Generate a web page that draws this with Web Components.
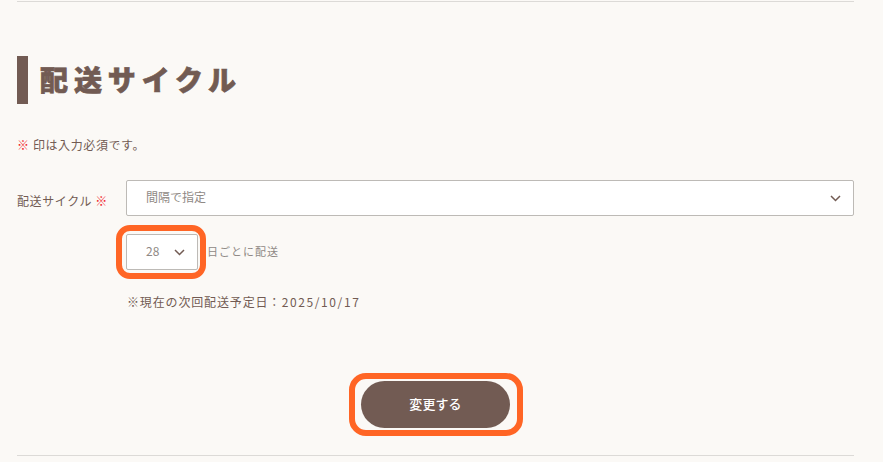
<!DOCTYPE html>
<html lang="ja">
<head>
<meta charset="utf-8">
<title>配送サイクル</title>
<style>
    html, body { margin: 0; height: 100%; background: #fbf9f6; overflow: hidden; }
    body { font-family: "Noto Sans CJK JP", "Noto Sans", sans-serif; color: #725b53; }
</style>
</head>
<body>
<template id="heading-tpl">
    <style>
        :host { display: flex; align-items: center; height: 48px; border-left: 11px solid #725b53; padding-left: 12px; }
        span { font-size: 28px; font-weight: 900; letter-spacing: 5.9px; line-height: 48px; position: relative; top: -1px; -webkit-text-stroke: .7px #725b53; }
    </style>
    <span><slot></slot></span>
</template>

<template id="select-tpl">
    <style>
        :host { display: block; position: relative; box-sizing: border-box; background: #fff; border: 1px solid #bdbab6; border-radius: 2px; color: #8f8985; font-size: 12px; height: 36px; }
        .in { display: flex; align-items: center; justify-content: space-between; height: 100%; padding: 0 12px 0 19px; box-sizing: border-box; }
        .in span { padding-bottom: 3px; }
        svg { display: block; width: 11px; height: 7px; }
    </style>
    <div class="in"><span><slot></slot></span>
        <svg viewBox="0 0 11 7"><path d="M1 1l4.500 4.500L10 1" fill="none" stroke="#725b53" stroke-width="1.500"/></svg>
    </div>
</template>

<template id="mark-tpl">
    <style>
        :host { display: block; position: relative; }
        :host::after { content: ""; position: absolute; box-sizing: border-box; pointer-events: none;
            inset: var(--gap, -9px -8px -9px -10px); border: 6px solid #ff6525; border-radius: var(--r, 14px); }
    </style>
    <slot></slot>
</template>

<template id="btn-tpl">
    <style>
        :host { display: flex; align-items: center; justify-content: center; width: 149px; height: 47px; border-radius: 24px; background: #725b53; color: #fff; font-size: 13px; font-weight: 500; letter-spacing: .1px; }
        span { padding-bottom: 2px; }
    </style>
    <span><slot></slot></span>
</template>

<template id="form-tpl">
    <style>
        :host { display: block; padding: 0 29px 0 17px; }
        hr { border: 0; height: 1px; background: #dcdad7; margin: 0; }
        hr.top { margin-top: 1px; }
        .head { margin-top: 54px; }
        .note { margin: 32px 0 0; font-size: 12px; line-height: 18px; letter-spacing: .6px; }
        .req { color: #f0262c; }
        .row { display: grid; grid-template-columns: 109px 1fr; margin-top: 26px; }
        .lbl { font-size: 12px; line-height: 18px; padding-top: 12px; letter-spacing: .6px; white-space: nowrap; }
        .cycle { display: flex; align-items: center; gap: 9px; margin-top: 18px; font-size: 11px; letter-spacing: 1px; color: #8f8985; }
        .cycle x-mark { width: 72px; letter-spacing: 0; }
        .cycle > span { padding-bottom: 2px; }
        .next { margin: 23px 0 0 1px; font-size: 12px; line-height: 18px; letter-spacing: .85px; }
        .next span { margin-left: -3px; letter-spacing: 1.6px; }
        .act { display: flex; justify-content: center; margin-top: 70px; }
        .act x-mark { --gap: -8px -13px -8px -12px; --r: 17px; }
        hr.bot { margin-top: 27px; }
    </style>
    <hr class="top">
    <x-heading class="head">配送サイクル</x-heading>
    <p class="note"><span class="req">※</span> 印は入力必須です。</p>
    <div class="row">
        <div class="lbl">配送サイクル <span class="req">※</span></div>
        <div>
            <x-select>間隔で指定</x-select>
            <div class="cycle">
                <x-mark><x-select>28</x-select></x-mark>
                <span>日ごとに配送</span>
            </div>
            <p class="next">※現在の次回配送予定日： <span>2025/10/17</span></p>
        </div>
    </div>
    <div class="act"><x-mark><x-button>変更する</x-button></x-mark></div>
    <hr class="bot">
</template>

<x-form></x-form>

<script>
    // every element just stamps its template into an open shadow root
    const register = (name, tpl) => {
        customElements.define(name, class extends HTMLElement {
            constructor() {
                super();
                const root = this.attachShadow({mode: 'open'});
                root.appendChild(document.getElementById(tpl).content.cloneNode(true));
            }
        });
    };

    register('x-heading', 'heading-tpl');
    register('x-select', 'select-tpl');
    register('x-mark', 'mark-tpl');
    register('x-button', 'btn-tpl');
    register('x-form', 'form-tpl');
</script>
</body>
</html>
